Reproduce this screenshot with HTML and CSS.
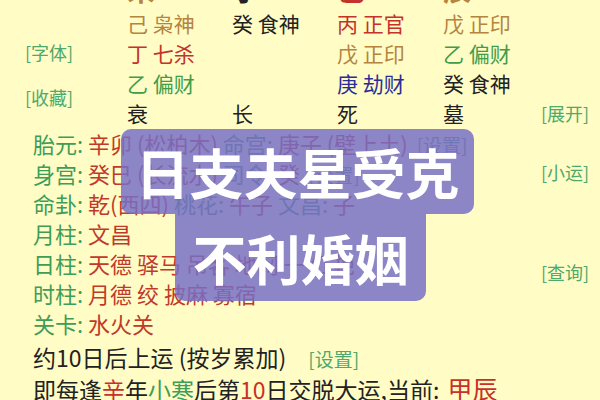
FILE: index.html
```html
<!DOCTYPE html>
<html lang="zh-CN">
<head>
<meta charset="utf-8">
<title>排盘</title>
<link rel="stylesheet" href="styles.css">
</head>
<body>
<section class="pillars">
  <div class="side-left">
    <span class="link">[字体]</span>
    <span class="link">[收藏]</span>
  </div>
  <div class="grid">
    <span class="branch earth">未</span>
    <span class="branch water">子</span>
    <span class="branch fire">巳</span>
    <span class="branch earth">辰</span>
    <span></span>

    <span class="earth">己 枭神</span>
    <span class="water">癸 食神</span>
    <span class="fire">丙 正官</span>
    <span class="earth">戊 正印</span>
    <span></span>

    <span class="fire">丁 七杀</span>
    <span></span>
    <span class="earth">戊 正印</span>
    <span class="wood">乙 偏财</span>
    <span></span>

    <span class="wood">乙 偏财</span>
    <span></span>
    <span class="metal">庚 劫财</span>
    <span class="water">癸 食神</span>
    <span></span>

    <span class="water">衰</span>
    <span class="water">长</span>
    <span class="water">死</span>
    <span class="water">墓</span>
    <span class="link">[展开]</span>
  </div>
</section>

<section class="details">
  <div class="lines">
    <p class="line"><span class="lbl">胎元:</span> <span class="val">辛卯 (松柏木)</span> <span class="lbl">命宫:</span> <span class="val">庚子 (壁上土)</span> <span class="link set">[设置]</span></p>
    <p class="line"><span class="lbl">身宫:</span> <span class="val">癸巳 (长流水)</span> <span class="lbl">司令:</span> <span class="val">癸</span> <span class="link set">[设置]</span></p>
    <p class="line"><span class="lbl">命卦:</span> <span class="val">乾(西四)</span> <span class="lbl">桃花:</span> <span class="val">午子</span> <span class="lbl">文昌:</span> <span class="val">子</span></p>
    <p class="line"><span class="lbl">月柱:</span> <span class="val">文昌</span></p>
    <p class="line"><span class="lbl">日柱:</span> <span class="val">天德 驿马 吊客 地网 一 红艳</span></p>
    <p class="line"><span class="lbl">时柱:</span> <span class="val">月德 绞 披麻 寡宿</span></p>
    <p class="line"><span class="lbl">关卡:</span> <span class="val">水火关</span></p>
    <p class="line plain gap">约10日后上运 (按岁累加)<span class="link set wide">[设置]</span></p>
    <p class="line plain last">即每逢<span class="red">辛</span>年<span class="green">小寒</span>后第<span class="red">10</span>日交脱大运,当前: <span class="red big">甲辰</span></p>
  </div>
  <div class="side-right">
    <span class="link">[小运]</span>
    <span class="link">[查询]</span>
  </div>
</section>

<div class="overlay">
  <div class="ov-box ov-top">日支夫星受克</div>
  <div class="ov-box ov-bottom">不利婚姻</div>
</div>
</body>
</html>
```

FILE: styles.css
```css
* {
  box-sizing: border-box;
  margin: 0;
  padding: 0;
}

html,
body {
  width: 600px;
  height: 400px;
  overflow: hidden;
}

body {
  position: relative;
  background: #fffcc6;
  color: #222;
  font-family: "Noto Sans CJK SC", "Noto Sans", sans-serif;
}

.link {
  font-size: 18px;
  line-height: 24px;
  color: #4fa96b;
  white-space: nowrap;
}

/* ---------- pillars ---------- */
.pillars {
  display: flex;
  margin-top: -22px;
}

.side-left {
  width: 127px;
  padding: 62px 0 0 25px;
  display: flex;
  flex-direction: column;
  gap: 21px;
}

.grid {
  display: grid;
  grid-template-columns: 105px 105px 106px 98px 59px;
  grid-auto-rows: 30px;
  align-items: center;
  font-size: 21px;
  line-height: 30px;
  white-space: nowrap;
}

.branch {
  font-size: 28px;
  font-weight: 700;
  margin-bottom: 9px;
}

.earth { color: #b5843f; }
.water { color: #222; }
.fire  { color: #c3332b; }
.wood  { color: #3f9d4a; }
.metal { color: #2a2e9a; }

/* ---------- details ---------- */
.details {
  display: flex;
  padding-left: 33px;
}

.lines {
  flex: 1;
  display: flex;
  flex-direction: column;
}

.line {
  height: 30px;
  font-size: 22px;
  line-height: 30px;
  white-space: nowrap;
}

.line .set {
  font-size: 19px;
  margin-left: 4px;
}

.line .set.wide {
  margin-left: 22px;
}

.lbl { color: #3e9d56; }
.val { color: #c0392b; }

.plain { color: #222; font-size: 23px; }
.gap { margin-top: 4px; }
.last { height: 32px; line-height: 32px; }

.red { color: #c8302a; }
.green { color: #3e9d56; }
.big { font-size: 25px; margin-left: 3px; }

.side-right {
  width: 59px;
  padding-top: 32px;
  display: flex;
  flex-direction: column;
  gap: 76px;
}

/* ---------- overlay ---------- */
.overlay {
  position: absolute;
  left: 121px;
  top: 129px;
  width: 353px;
  display: flex;
  flex-direction: column;
  align-items: center;
}

.ov-box {
  display: flex;
  align-items: center;
  justify-content: center;
  background: rgba(118, 110, 198, 0.84);
  color: #fff;
  font-size: 54px;
  font-weight: 700;
  line-height: 1;
  white-space: nowrap;
}

.ov-top {
  width: 353px;
  height: 85px;
  border-radius: 10px;
}

.ov-bottom {
  width: 251px;
  height: 87px;
  margin-left: 6px;
  border-radius: 0 0 10px 10px;
}
```
